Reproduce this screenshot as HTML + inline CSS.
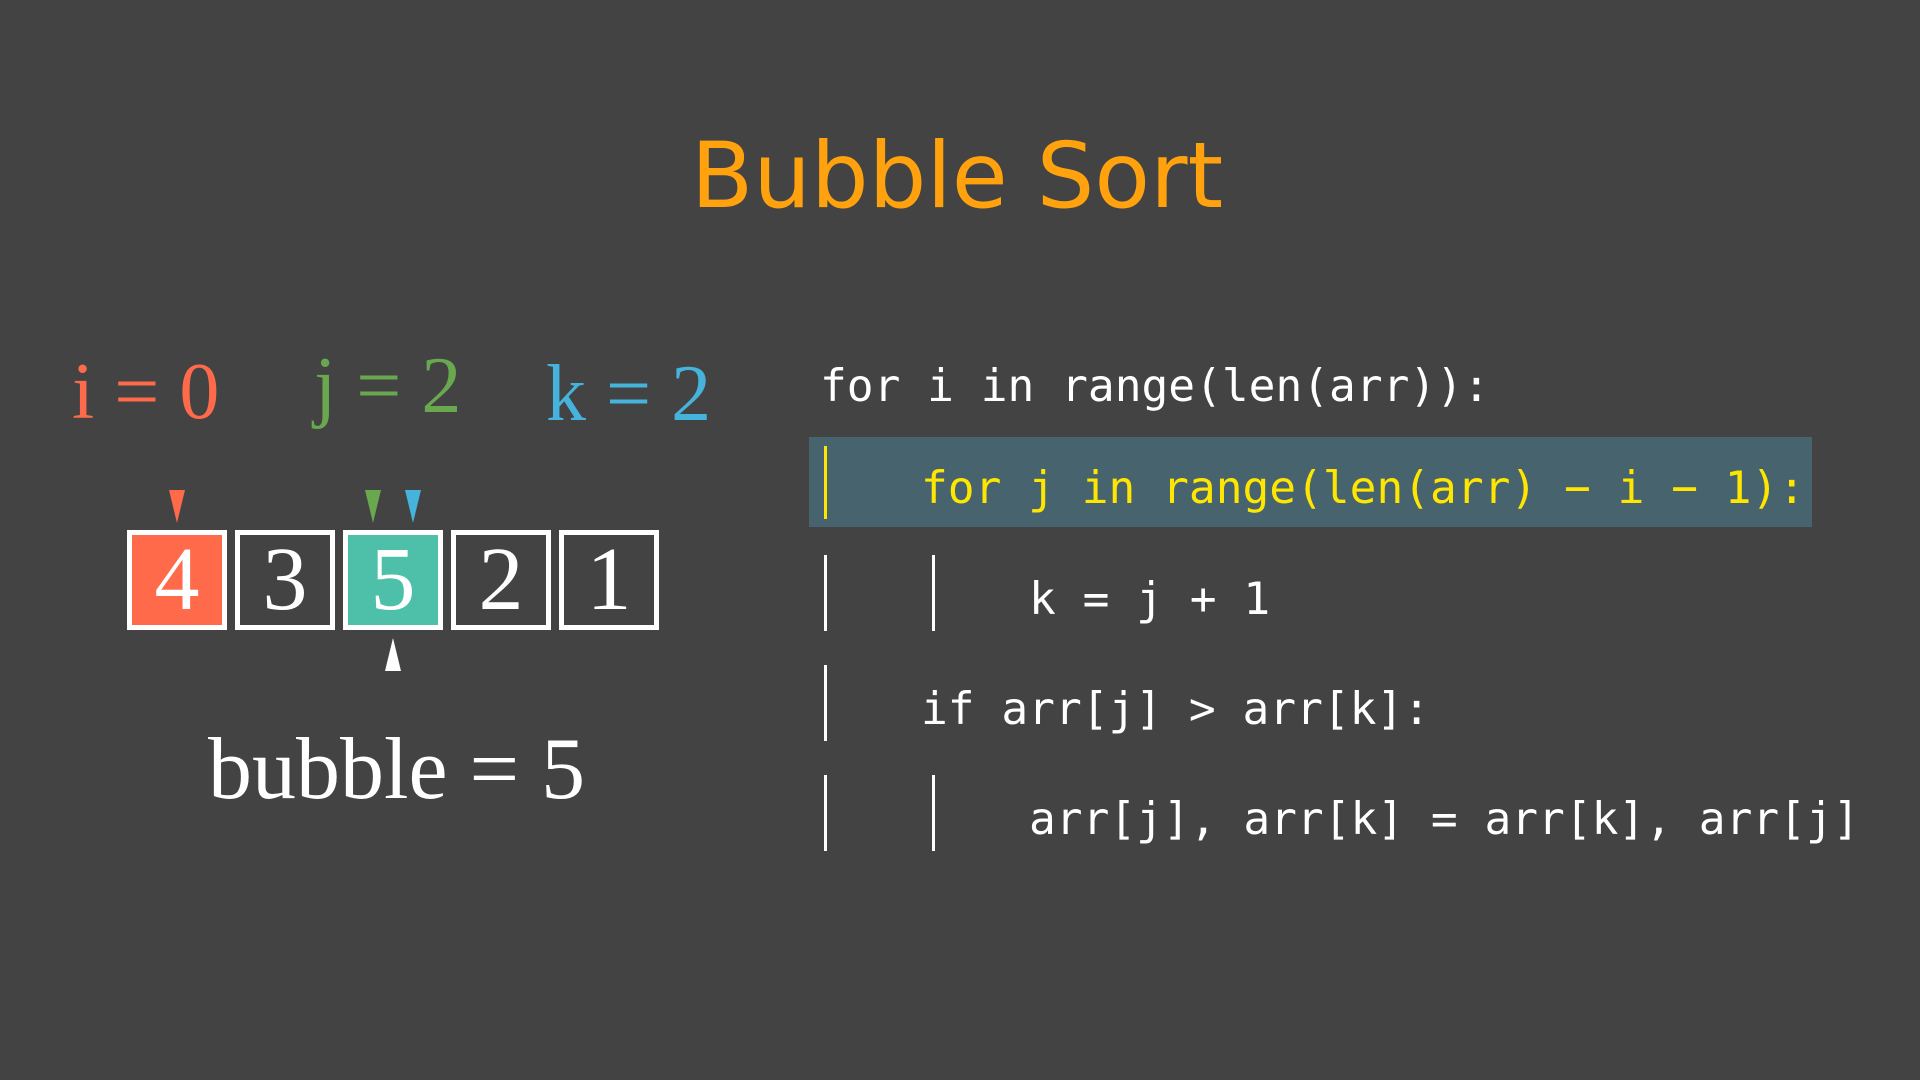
<!DOCTYPE html>
<html><head><meta charset="utf-8"><style>
html,body{margin:0;padding:0}
body{width:1920px;height:1080px;background:#434343;position:relative;overflow:hidden}
.a{position:absolute;white-space:pre;line-height:1}
.t{font-family:"DejaVu Sans","Liberation Sans",sans-serif;font-size:91px;color:#ffa20e;left:0;width:1914px;text-align:center;top:131px}
.s{font-family:"Liberation Serif","DejaVu Serif",serif}
.c{font-family:"DejaVu Sans Mono","Liberation Mono",monospace;font-size:44.5px;color:#fff}
.box{position:absolute;top:530px;width:90px;height:90px;border:5px solid #fff;display:flex;align-items:center;justify-content:center;font-family:"Liberation Serif",serif;font-size:90px;color:#fff;line-height:1}
.bar{position:absolute;width:3px;background:#fff}
</style></head><body>
<div class="a t">Bubble Sort</div>
<div class="a s" style="left:72px;top:352px;font-size:80px;color:#ff6b4a">i = 0</div>
<div class="a s" style="left:314px;top:346px;font-size:80px;color:#6aa84f">j = 2</div>
<div class="a s" style="left:546px;top:354px;font-size:80px;color:#45b3dc">k = 2</div>

<svg class="a" style="left:0;top:0" width="800" height="700">
<polygon points="169,490 185,490 177,523" fill="#ff6b4a"/>
<polygon points="365,490 381,490 373,523" fill="#6aa84f"/>
<polygon points="405,490 421,490 413,523" fill="#45b3dc"/>
<polygon points="385,671 401,671 393,638" fill="#fff"/>
</svg>
<div class="box" style="left:127px;background:#ff6b4a">4</div>
<div class="box" style="left:235px">3</div>
<div class="box" style="left:343px;background:#4ec0aa">5</div>
<div class="box" style="left:451px">2</div>
<div class="box" style="left:559px">1</div>
<div class="a s" style="left:208px;top:726px;font-size:88px;color:#fff">bubble = 5</div>

<div style="position:absolute;left:809px;top:437px;width:1003px;height:90px;background:#46636e"></div>
<div class="bar" style="left:824px;top:446px;height:73px;background:#ffe600"></div>
<div class="a c" style="left:820px;top:365px">for i in range(len(arr)):</div>
<div class="a c" style="left:921px;top:467px;color:#ffe600">for j in range(len(arr) − i − 1):</div>
<div class="bar" style="left:824px;top:555px;height:76px"></div>
<div class="bar" style="left:932px;top:555px;height:76px"></div>
<div class="a c" style="left:1029px;top:578px">k = j + 1</div>
<div class="bar" style="left:824px;top:665px;height:76px"></div>
<div class="a c" style="left:921px;top:688px">if arr[j] &gt; arr[k]:</div>
<div class="bar" style="left:824px;top:775px;height:76px"></div>
<div class="bar" style="left:932px;top:775px;height:76px"></div>
<div class="a c" style="left:1029px;top:798px">arr[j], arr[k] = arr[k], arr[j]</div>
</body></html>
